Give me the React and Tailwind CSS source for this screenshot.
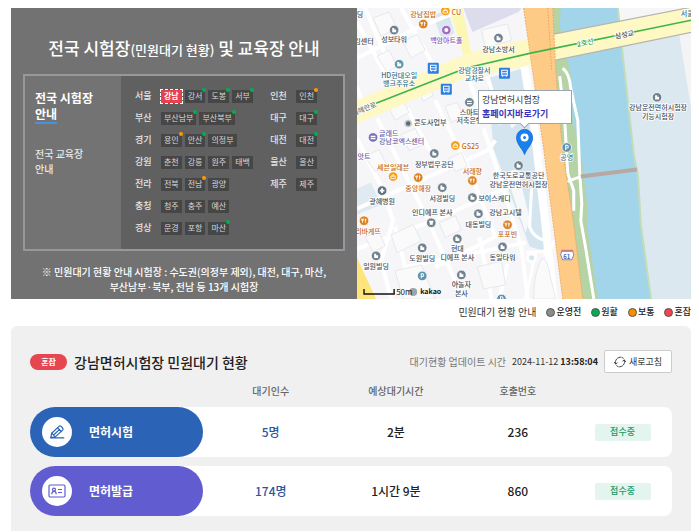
import { useState } from 'react';

const regions = [
  { name: '서울', offices: [['강남', 'busy'], ['강서', 'smooth'], ['도봉', 'smooth'], ['서부', 'smooth']] },
  { name: '부산', offices: [['부산남부', 'smooth'], ['부산북부', 'smooth']] },
  { name: '경기', offices: [['용인', 'normal'], ['안산', 'smooth'], ['의정부']] },
  { name: '강원', offices: [['춘천'], ['강릉'], ['원주'], ['태백']] },
  { name: '전라', offices: [['전북'], ['전남', 'normal'], ['광양']] },
  { name: '충청', offices: [['청주'], ['충주'], ['예산']] },
  { name: '경상', offices: [['문경'], ['포항'], ['마산', 'smooth']] },
];

const metros = [
  { name: '인천', offices: [['인천', 'normal']] },
  { name: '대구', offices: [['대구', 'smooth']] },
  { name: '대전', offices: [['대전', 'smooth']] },
  { name: '울산', offices: [['울산']] },
  { name: '제주', offices: [['제주']] },
];

const dotColors = {
  smooth: 'bg-[#00b050]',
  normal: 'bg-[#ff9800]',
};

const legend = [
  { label: '운영전', color: 'bg-[#8c8c8c]' },
  { label: '원활', color: 'bg-[#00b050]' },
  { label: '보통', color: 'bg-[#f39200]' },
  { label: '혼잡', color: 'bg-[#ee4650]' },
];

const DARK = '#43505c';
const ORANGE = '#c46a12';
const PURPLE = '#8a55b5';
const TEAL = '#3c7486';

// [text, x, y, color, anchor]
const labels = [
  ['딩', 3, 6, DARK],
  ['강남집밥', 66, 6, ORANGE],
  ['CU', 99, 4, ORANGE],
  ['백암아트홀', 89, 32, PURPLE],
  ['성보타워', 37, 31, DARK],
  ['김센터', 7, 33, DARK],
  ['강남소방서', 141, 41, DARK],
  ['HD현대오일', 42, 67, TEAL],
  ['뱅크주유소', 42, 75, TEAL],
  ['강남경찰서', 117, 62, TEAL],
  ['교차로', 117, 70, TEAL],
  ['스마트', 112, 104, DARK],
  ['저축은행', 112, 112, DARK],
  ['콘도사업부', 73, 114, DARK],
  ['글래드', 22, 125, '#6a62ac', 'start'],
  ['강남코엑스센터', 22, 133, '#6a62ac', 'start'],
  ['GS25', 113, 138, ORANGE],
  ['앗트', 7, 147, '#6a62ac'],
  ['정부법무공단', 77, 155, DARK],
  ['세븐일레븐', 36, 158, ORANGE],
  ['서래향', 115, 162, ORANGE],
  ['중앙해장', 61, 179, ORANGE],
  ['서경빌딩', 85, 189, DARK],
  ['광혜병원', 25, 192, DARK],
  ['보이스캐디', 121, 189, DARK, 'start'],
  ['한국도로교통공단', 161, 166, DARK],
  ['강남운전면허시험장', 161, 175, DARK],
  ['인디에프 본사', 75, 203, DARK],
  ['강남고시텔', 148, 203, DARK],
  ['대동빌딩', 121, 215, DARK],
  ['리바게뜨', 11, 222, ORANGE],
  ['포포빈', 150, 225, ORANGE],
  ['현대', 100, 239, DARK],
  ['디에프 본사', 100, 248, DARK],
  ['도원빌딩', 65, 249, DARK],
  ['동일타워', 145, 248, DARK],
  ['일원빌딩', 19, 257, DARK],
  ['야놀자', 104, 275, DARK],
  ['본사', 104, 284, DARK],
  ['공영', 209, 148, TEAL],
  ['서울', 329, 5, TEAL],
  ['강남운전면허시험장', 300, 99, DARK],
  ['기능시험장', 300, 108, DARK],
];

// [x, y, color, kind]
const pins = [
  [66, 16, '#d98324', 'food'],
  [88, 3, '#f3a11c', 'shop'],
  [89, 22, '#a66bc4', 'ring'],
  [37, 22, '#71828f', 'building'],
  [141, 30, '#71828f', 'building'],
  [42, 56, '#5f98aa', 'building'],
  [112, 94, '#71828f', 'bank'],
  [16, 129, '#7a70c0', 'bank'],
  [98, 137, '#f3a11c', 'shop'],
  [77, 145, '#71828f', 'building'],
  [36, 168, '#f3a11c', 'shop'],
  [115, 172, '#d98324', 'food'],
  [61, 169, '#d98324', 'food'],
  [85, 179, '#71828f', 'building'],
  [25, 182, '#5f7180', 'cross'],
  [115, 189, '#71828f', 'building'],
  [161, 157, '#71828f', 'building'],
  [74, 214, '#71828f', 'shirt'],
  [121, 205, '#71828f', 'building'],
  [7, 212, '#d98324', 'food'],
  [150, 216, '#d98324', 'food'],
  [100, 230, '#71828f', 'building'],
  [65, 239, '#71828f', 'building'],
  [145, 238, '#71828f', 'building'],
  [19, 247, '#71828f', 'building'],
  [104, 266, '#71828f', 'building'],
  [299, 89, '#71828f', 'building'],
  [65, 267, '#5f93b0', 'parking'],
  [209, 139, '#5f93b0', 'parking'],
  [144, 290, '#5f93b0', 'parking'],
];

const buses = [[76, 60], [147, 65], [89, 81]];

function PinGlyph({ kind }) {
  if (kind === 'food') return <path d="M-1.5 -2v4M1.3 -2v4M-2.4 -2v1.5h1.8v-1.5M1.3 -2q1.2 .8 0 2.2" stroke="#fff" strokeWidth="0.8" fill="none" />;
  if (kind === 'shop') return <path d="M-2.2 -.4h4.4v2.4h-4.4zM-1.2 -.4a1.2 1.5 0 0 1 2.4 0" stroke="#fff" strokeWidth="0.8" fill="none" />;
  if (kind === 'cross') return <path d="M0 -2.3v4.6M-2.3 0h4.6" stroke="#fff" strokeWidth="1.8" />;
  if (kind === 'parking') return <path d="M-1 2.4v-4.6h1.2a1.3 1.3 0 0 1 0 2.7h-1.2" stroke="#fff" strokeWidth="1" fill="none" />;
  if (kind === 'ring') return <circle r="2" fill="#fff" />;
  if (kind === 'bank') return <path d="M-2.4 -1.6h4.8v1.3h-4.8zM-2.4 .6h4.8v1.2h-4.8z" fill="#fff" />;
  if (kind === 'shirt') return <path d="M-2.4 -1.4l1.4 -.8q1 .9 2 0l1.4 .8l-.9 1.4v2h-3v-2z" fill="#fff" />;
  return <path d="M-1.9 2.1v-4.2h2v1.5h1.9v2.7z" fill="#fff" />;
}

function MapDrawing() {
  return (
    <svg viewBox="0 0 334 290" preserveAspectRatio="xMinYMin slice" className="block h-full w-full" role="img" aria-label="강남면허시험장 지도">
      <rect width="334" height="290" fill="#f6f6f8" />

      {/* blocks */}
      <path d="M106 0h58l-3 4l-46 20z" fill="#dcdcec" />
      <path d="M76 8l14-7l7 24l-12 8z" fill="#d8e6ee" />
      <path d="M130 70l36-10l20 150v32l-14-4l-36-98z" fill="#d5e5ef" />
      <path d="M0 180l14-6l10 22l-24 10z" fill="#dfeaf1" />
      <path d="M142 86l16-4l6 30l-10 8zM148 164l12-4l12 50l-4 14z" fill="#f6f8fa" />

      {/* side streets */}
      <g stroke="#fff" strokeWidth="4" fill="none">
        <path d="M8 0l38 88M44 0l36 64M0 50l60-30l34-14M4 90l-4-12M0 14l38 70" />
        <path d="M78 92l34 70l26 66l-60 30M50 100l30 56M20 110l50 100l36 80M0 200l130-58l8-10M0 240l76-28l84-38" />
        <path d="M38 218l10 40l40-8l80-16M0 130l26 52l10 30l-12 40l10 38M126 120l20 60l18 60l6 50" />
        <path d="M112 72l10 30M130 68l14 48" />
        <path d="M166 54l10 60l10 86l10 90" strokeWidth="8" />
        <path d="M174 180q-2 36-2 38q4 12 18 14M168 244l22-2M178 244l-10 46M186 246q8-2 10-14" strokeWidth="3" />
        <path d="M150 255l-8 35M122 228l12 62" />
      </g>
      <g stroke="#e2e4e8" strokeWidth="0.8" fill="#fafafb">
        <path d="M16 10l16-6l8 16l-16 8zM46 34l14-8l8 16l-14 8zM20 48l12-6l8 16l-10 6zM60 80l10-5l6 12l-10 6zM124 22l26-6l4 16l-26 8z" />
        <path d="M30 96l14-6l8 14l-14 8zM88 98l12-4l6 14l-12 6zM8 148l14-7l8 16l-12 6zM44 126l14-6l8 16l-14 6zM92 150l12-6l6 14l-12 5z" />
        <path d="M34 226l22-10l8 16l-24 12zM82 214l16-7l6 14l-16 8zM38 262l26-6l14 34h-32zM120 258l24-6l4 24l-22 4zM8 228l14-5l6 14l-12 6z" />
        <path d="M184 250q4-1 6 6l8 34h-22q0-26 8-40z" />
      </g>
      <circle cx="174" cy="249" r="4" fill="#d5e5ef" stroke="#fff" strokeWidth="3" />

      {/* river and banks */}
      <path d="M195 0H205L203 20L215 62L217 112L226 150L231 200L230 215L241 290H224L200 140Z" fill="#b5d3a5" />
      <path d="M203 0H260L264 40L276 147L280 167L283 217L293 290H240L229 215L230 200L226 168L224 150L215 112L213 66L202 18Z" fill="#a2d4ea" />
      <path d="M260 0L264 40L276 147L280 167L283 217L293 290H334V0Z" fill="#dce8f0" />
      <path d="M260 0h74v20h-71z" fill="#f6f6f8" />
      <path d="M320 20l13 80h1v-80z" fill="#f4f4f6" />
      <path d="M260 0L264 40L276 147L280 167L283 217L293 290" fill="none" stroke="#c3ddb9" strokeWidth="2" />
      <path d="M202 68L207 112L210 165L216 182V202M205 60Q212 66 213 80L220 112L222 165L224 195L223 212L228 240L236 290M209 173L223 168" fill="none" stroke="#fff" strokeWidth="3" />
      <path d="M223 168l56-7" stroke="#b8a8a2" strokeWidth="4" />

      {/* yellow roads */}
      <path d="M92 0h13l10 50h-8z" fill="#fdf7b4" />
      <path d="M0 92l108-46l27-8l61-12l138-27v25l-136 28l-90 18l-108 45z" fill="#fef9c4" />
      <path d="M0 249l19 41h-19z" fill="#fde57c" />
      <path d="M196 26l138-27M198 52l136-28" stroke="#b5b5ad" strokeWidth="1.2" />

      {/* highway */}
      <path d="M166 0H195L198 60L202 112L206 150L216 215L225 290H205L186 140L182 112Z" fill="#fecb86" />
      <path d="M166 0L182 112L186 140L205 290M195 0L198 60L202 112L206 150L216 215L225 290M190 0L194 62" fill="none" stroke="#e7a463" strokeWidth="0.8" strokeDasharray="2 1" />

      {/* subway line */}
      <path d="M19 95l79-31l14-5l61-14l161-33" fill="none" stroke="#3db54a" strokeWidth="1.6" />

      {pins.map(([x, y, color, kind], i) => (
        <g key={i} transform={`translate(${x} ${y})`}>
          <circle r="4.8" fill={color} stroke="#fff" strokeWidth="0.8" />
          <PinGlyph kind={kind} />
        </g>
      ))}
      <circle cx="51" cy="115" r="3" fill="#5f6a74" stroke="#c5cbd0" strokeWidth="1.5" />

      {buses.map(([x, y]) => (
        <g key={x} transform={`translate(${x} ${y})`}>
          <rect x="-5.5" y="-5.5" width="11" height="11" rx="1" fill="#2f80e4" />
          <path d="M-2.8 2v-5h5.6v5zM-2.8 -.4h5.6M-1.8 2v1.4M1.8 2v1.4" fill="none" stroke="#fff" strokeWidth="1" />
        </g>
      ))}

      <g fontSize="7" fontWeight="500" stroke="#fff" strokeWidth="1.6" strokeLinejoin="round" paintOrder="stroke" textAnchor="middle">
        {labels.map(([text, x, y, color, anchor], i) => (
          <text key={i} x={x} y={y + 3} fill={color} textAnchor={anchor || 'middle'}>{text}</text>
        ))}
        <text transform="translate(8 103) rotate(-22)" fill="#77776c">테헤란로</text>
        <text transform="translate(228 37) rotate(-12)" fill="#2aa63b">2호선</text>
        <text transform="translate(267 29) rotate(-12)" fill="#55554d">삼성교</text>
      </g>

      {/* route shield */}
      <path d="M204 242h11l1 4l-2 5h-9l-2-5z" fill="#fff" stroke="#7f8dc4" strokeWidth="1" />
      <path d="M204 241h11v2h-11z" fill="#c77a83" />
      <text x="209" y="250" fontSize="6" fontWeight="700" textAnchor="middle" fill="#4d63b5">61</text>

      {/* scale */}
      <path d="M7 280v5h30v-5" fill="none" stroke="#111" strokeWidth="1.4" />
      <circle cx="56" cy="283" r="4" fill="#71828f" opacity="0.7" />
      <text x="39" y="286" fontSize="8" fill="#222">50m</text>
      <text x="63" y="285" fontSize="7" fontWeight="700" fill="#111">kakao</text>

      {/* selected place */}
      <path d="M167 146c-2-6-8-10-8-17a8 8 0 0 1 16 0c0 7-6 11-8 17z" fill="#1a80ec" stroke="#0f66c8" strokeWidth="0.8" />
      <circle cx="167" cy="129" r="4" fill="#fff" />
      <circle cx="167" cy="129" r="1.5" fill="#1a80ec" />
    </svg>
  );
}

function OfficeMap() {
  return (
    <div className="relative h-full overflow-hidden">
      <div className="absolute inset-0"><MapDrawing /></div>
      <div className="absolute left-[121px] top-[82px] w-[94px] border border-[#9aa5b1] bg-white px-[3px] py-[2px] text-[9px] leading-[14px] whitespace-nowrap text-[#333]">
        <p>강남면허시험장</p>
        <a href="#home" className="block font-bold text-[#3a33b8]">홈페이지바로가기</a>
        <span className="absolute -bottom-[4px] left-[42px] h-[7px] w-[7px] rotate-45 border-r border-b border-[#9aa5b1] bg-white" />
      </div>
    </div>
  );
}

function RegionRow({ region, selected, onSelect }) {
  return (
    <li className="flex h-[14px] items-center">
      <span className="w-[26px] text-[9px] font-medium text-[#e4e4e4]">{region.name}</span>
      <div className="flex gap-[3px]">
        {region.offices.map(([name, status]) => (
          <button
            key={name}
            onClick={() => onSelect(name)}
            className={`relative flex h-[13px] items-center px-[3px] text-[8px] whitespace-nowrap ${selected === name ? 'bg-[#e8414c] font-bold text-white outline outline-dashed outline-white' : 'bg-[#464646] text-[#d6d6d6]'}`}
          >
            {name}
            {dotColors[status] && <span className={`absolute -top-[2px] -right-[1px] h-1 w-1 rounded-full ${dotColors[status]}`} />}
          </button>
        ))}
      </div>
    </li>
  );
}

function OfficePicker() {
  const [selected, setSelected] = useState('강남');

  return (
    <section className="bg-[#727272] px-3 pt-7 pb-[5px] text-white">
      <h1 className="text-center text-[17px] leading-6 font-medium whitespace-nowrap">
        전국 시험장<span className="text-[13px]">(민원대기 현황)</span> 및 교육장 안내
      </h1>
      <div className="mt-3 grid grid-cols-[96px_1fr] border-2 border-[#95999e] bg-[#606060]">
        <nav className="flex flex-col items-start gap-[22px] bg-[#737373] pt-[14px] pl-[10px]">
          <button className="text-left text-[12px] leading-4 font-bold">
            전국 시험장<br />
            <span className="inline-block border-b-2 border-[#4a90dc]">안내</span>
          </button>
          <button className="text-left text-[10px] leading-[15px] font-medium text-[#e8e8e8]">전국 교육장<br />안내</button>
        </nav>
        <div className="flex justify-between pt-[13px] pr-[26px] pb-[14px] pl-[14px]">
          <ul className="flex flex-col gap-[8px]">
            {regions.map(r => <RegionRow key={r.name} region={r} selected={selected} onSelect={setSelected} />)}
          </ul>
          <ul className="flex flex-col gap-[8px]">
            {metros.map(r => <RegionRow key={r.name} region={r} selected={selected} onSelect={setSelected} />)}
          </ul>
        </div>
      </div>
      <p className="mt-[13px] text-center text-[10px] leading-[15px] font-medium">
        ※ 민원대기 현황 안내 시험장 : 수도권(의정부 제외), 대전, 대구, 마산,<br />
        부산남부·북부, 전남 등 13개 시험장
      </p>
    </section>
  );
}

function Legend() {
  return (
    <div className="flex items-center justify-end gap-[10px] pt-[6px] pb-[7px] text-[9px] leading-[14px] font-medium text-[#222]">
      <span className="text-[10px] font-normal text-[#333]">민원대기 현황 안내</span>
      {legend.map(l => (
        <span key={l.label} className="flex items-center gap-px">
          <span className={`h-[9px] w-[9px] rounded-full border border-[#555] ${l.color}`} />
          {l.label}
        </span>
      ))}
    </div>
  );
}

function PencilIcon() {
  return (
    <svg viewBox="0 0 16 16" className="h-4 w-4" fill="none" stroke="#2b63b5" strokeWidth="1.2" strokeLinejoin="round" strokeLinecap="round">
      <path d="M1.800 13.600l.9-4.400l7.300-6.800a1.500 1.500 0 0 1 2.100 0l1.500 1.600a1.500 1.500 0 0 1 0 2.100l-7.300 6.800z" />
      <path d="M8.600 3.800l3.600 3.700M2.700 9.200l3.600 3.700M4.600 11l6-5.600M1.800 13.800h13" />
    </svg>
  );
}

function CardIcon() {
  return (
    <svg viewBox="0 0 18 14" className="h-[14px] w-[18px]" fill="none" stroke="#5f5bcf" strokeWidth="1.2">
      <rect x="1" y="1" width="16" height="12" rx="1.2" />
      <circle cx="6" cy="5.6" r="1.5" />
      <path d="M3.800 10.200q0-2.800 2.200-2.800t2.200 2.800M10 5.500h4M10 8.500h4" />
    </svg>
  );
}

function RefreshIcon() {
  return (
    <svg viewBox="0 0 12 12" className="h-3 w-3" fill="none" stroke="#444" strokeWidth="1" strokeLinecap="round">
      <path d="M7.200 1.200a5 5 0 0 0-5.600 6.600M4.800 10.800a5 5 0 0 0 5.600-6.600" />
      <path d="M.5 6.300l1.100 1.800l1.600-1.200M11.500 5.700l-1.100-1.800l-1.600 1.200M8.400 1.700l.9.600M3.600 10.300l-.9-.6" />
    </svg>
  );
}

const rows = [
  { name: '면허시험', Icon: PencilIcon, pill: 'bg-[#2b63b7]', people: '5명', wait: '2분', call: '236' },
  { name: '면허발급', Icon: CardIcon, pill: 'bg-[#615cd0]', people: '174명', wait: '1시간 9분', call: '860' },
];

function WaitingBoard() {
  return (
    <section className="rounded-t-md bg-[#f0f0f0] px-[19px] pt-6 pb-[6px]">
      <div className="flex items-center justify-between whitespace-nowrap">
        <div className="flex items-center gap-[7px]">
          <span className="flex h-4 w-[37px] items-center justify-center rounded-full bg-[#e5464f] text-[8px] font-bold text-white">혼잡</span>
          <h2 className="text-[14px] leading-5 font-medium text-[#222]">강남면허시험장 민원대기 현황</h2>
        </div>
        <div className="flex items-center gap-[6px] text-[9px] text-[#333]">
          <span className="text-[10px] text-[#777]">대기현황 업데이트 시간</span>
          <time>2024-11-12 <b className="text-[#222]">13:58:04</b></time>
          <button className="flex h-[23px] w-[68px] items-center justify-center gap-[3px] rounded-xs border border-[#ccc] bg-white">
            <RefreshIcon />
            새로고침
          </button>
        </div>
      </div>
      <table className="mt-[2px] w-full table-fixed border-separate border-spacing-x-0 border-spacing-y-[9px] text-center text-[12px] text-[#222]">
        <thead className="text-[10px] leading-[14px] text-[#666]">
          <tr>
            <th className="w-[27%] p-0"><span className="sr-only">업무</span></th>
            <th className="w-[21%] p-0 font-medium">대기인수</th>
            <th className="w-[18%] p-0 font-medium">예상대기시간</th>
            <th className="w-[20%] p-0 font-medium">호출번호</th>
            <th className="w-[14%] p-0"><span className="sr-only">상태</span></th>
          </tr>
        </thead>
        <tbody>
          {rows.map(({ name, Icon, pill, people, wait, call }) => (
            <tr key={name}>
              <th className="rounded-l-full bg-white p-0">
                <div className={`flex h-[50px] items-center gap-[17px] rounded-full pl-3 text-white ${pill}`}>
                  <span className="flex h-[30px] w-[30px] items-center justify-center rounded-full bg-white"><Icon /></span>
                  {name}
                </div>
              </th>
              <td className="bg-white p-0 font-medium text-[#2e559c]">{people}</td>
              <td className="bg-white p-0 font-medium">{wait}</td>
              <td className="bg-white p-0 font-medium">{call}</td>
              <td className="rounded-r-lg bg-white p-0 pr-[9px]">
                <span className="mx-auto flex h-[17px] w-14 items-center justify-center rounded-xs bg-[#e3f5ee] text-[9px] font-medium text-[#179a6a]">접수중</span>
              </td>
            </tr>
          ))}
        </tbody>
      </table>
    </section>
  );
}

export default function App() {
  return (
    <main className="bg-white pt-2 pr-2 pl-[11px] font-['Noto_Sans_CJK_KR',sans-serif]">
      <div className="grid grid-cols-[346fr_334fr]">
        <OfficePicker />
        <OfficeMap />
      </div>
      <Legend />
      <WaitingBoard />
    </main>
  );
}
